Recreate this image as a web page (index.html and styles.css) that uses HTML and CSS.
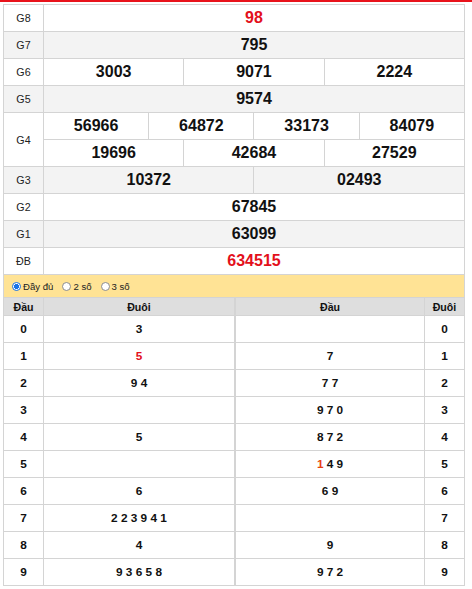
FILE: index.html
```html
<!DOCTYPE html>
<html lang="vi">
<head>
<meta charset="utf-8">
<title>Kết quả</title>
<link rel="stylesheet" href="styles.css">
</head>
<body>
<div class="topline"></div>
<div class="wrap">
  <table class="kq">
    <colgroup><col class="c-label"><col span="12"></colgroup>
    <tr><td class="lbl">G8</td><td colspan="12" class="num red">98</td></tr>
    <tr class="alt"><td class="lbl">G7</td><td colspan="12" class="num">795</td></tr>
    <tr><td class="lbl">G6</td><td colspan="4" class="num">3003</td><td colspan="4" class="num">9071</td><td colspan="4" class="num">2224</td></tr>
    <tr class="alt"><td class="lbl">G5</td><td colspan="12" class="num">9574</td></tr>
    <tr><td class="lbl" rowspan="2">G4</td><td colspan="3" class="num">56966</td><td colspan="3" class="num">64872</td><td colspan="3" class="num">33173</td><td colspan="3" class="num">84079</td></tr>
    <tr><td colspan="4" class="num">19696</td><td colspan="4" class="num">42684</td><td colspan="4" class="num">27529</td></tr>
    <tr class="alt"><td class="lbl">G3</td><td colspan="6" class="num">10372</td><td colspan="6" class="num">02493</td></tr>
    <tr><td class="lbl">G2</td><td colspan="12" class="num">67845</td></tr>
    <tr class="alt"><td class="lbl">G1</td><td colspan="12" class="num">63099</td></tr>
    <tr><td class="lbl">ĐB</td><td colspan="12" class="num red">634515</td></tr>
  </table>

  <div class="opts">
    <label class="opt"><span class="radio checked"></span>Đầy đủ</label>
    <label class="opt"><span class="radio"></span>2 số</label>
    <label class="opt"><span class="radio"></span>3 số</label>
  </div>

  <div class="loto">
    <table class="lt lt-left">
      <colgroup><col class="c-key"><col></colgroup>
      <tr class="head"><th>Đầu</th><th>Đuôi</th></tr>
      <tr><td class="key">0</td><td>3</td></tr>
      <tr><td class="key">1</td><td><span class="hl">5</span></td></tr>
      <tr><td class="key">2</td><td>9 4</td></tr>
      <tr><td class="key">3</td><td></td></tr>
      <tr><td class="key">4</td><td>5</td></tr>
      <tr><td class="key">5</td><td></td></tr>
      <tr><td class="key">6</td><td>6</td></tr>
      <tr><td class="key">7</td><td>2 2 3 9 4 1</td></tr>
      <tr><td class="key">8</td><td>4</td></tr>
      <tr><td class="key">9</td><td>9 3 6 5 8</td></tr>
    </table>
    <table class="lt lt-right">
      <colgroup><col><col class="c-key"></colgroup>
      <tr class="head"><th>Đầu</th><th>Đuôi</th></tr>
      <tr><td></td><td class="key">0</td></tr>
      <tr><td>7</td><td class="key">1</td></tr>
      <tr><td>7 7</td><td class="key">2</td></tr>
      <tr><td>9 7 0</td><td class="key">3</td></tr>
      <tr><td>8 7 2</td><td class="key">4</td></tr>
      <tr><td><span class="hl2">1</span> 4 9</td><td class="key">5</td></tr>
      <tr><td>6 9</td><td class="key">6</td></tr>
      <tr><td></td><td class="key">7</td></tr>
      <tr><td>9</td><td class="key">8</td></tr>
      <tr><td>9 7 2</td><td class="key">9</td></tr>
    </table>
  </div>
</div>
</body>
</html>
```

FILE: styles.css
```css
html, body {
  margin: 0;
  padding: 0;
  background: #fff;
}
body {
  font-family: "Liberation Sans", Arial, sans-serif;
  color: #111;
}
.topline {
  height: 2px;
  background: #e8131b;
  margin-bottom: 2px;
}
.wrap {
  margin-left: 3px;
  width: 462px;
}
.kq {
  width: 462px;
  border-collapse: collapse;
  table-layout: fixed;
}
.kq .c-label { width: 40px; }
.kq td {
  border: 1px solid #d4d4d4;
  height: 26px;
  padding: 0;
  text-align: center;
  vertical-align: middle;
}
.kq tr.alt td { background: #f3f3f3; }
.kq td.lbl {
  background: #fff;
  font-size: 10.7px;
  color: #222;
}
.kq tr.alt td.lbl { background: #f3f3f3; }
.kq td.num {
  font-size: 16px;
  font-weight: bold;
  color: #111;
}
.kq td.red { color: #e3101b; }

.opts {
  height: 22px;
  background: #ffe395;
  border: 1px solid #d4d4d4;
  border-top: 0;
  display: flex;
  align-items: center;
  padding-left: 8px;
  gap: 9px;
  font-size: 9.6px;
  color: #222;
}
.opt {
  display: inline-flex;
  align-items: center;
}
.radio {
  width: 7px;
  height: 7px;
  border: 1px solid #8c8c8c;
  border-radius: 50%;
  background: #fff;
  margin-right: 2px;
  box-sizing: content-box;
}
.radio.checked {
  border-color: #1a73e8;
  background: radial-gradient(circle, #1a73e8 0 2.3px, #fff 2.8px);
}

.loto {
  display: flex;
}
.lt {
  border-collapse: collapse;
  table-layout: fixed;
}
.lt-left { width: 232px; }
.lt-right { width: 230px; }
.lt .c-key { width: 40px; }
.lt th {
  background: #dedede;
  height: 17px;
  padding: 0;
  font-size: 10.6px;
  font-weight: bold;
  color: #111;
  border: 1px solid #d4d4d4;
  border-top: 0;
  border-bottom: 0;
}
.lt td {
  border: 1px solid #d4d4d4;
  height: 26px;
  padding: 0;
  text-align: center;
  font-size: 11.8px;
  font-weight: bold;
  color: #111;
}
.lt-left { border-right: 1px solid #d4d4d4; }
.hl { color: #e3101b; }
.hl2 { color: #e8400f; }
```
